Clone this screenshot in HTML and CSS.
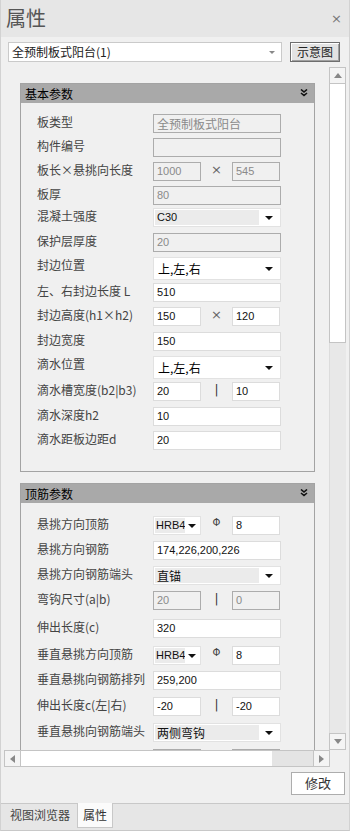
FILE: index.html
```html
<!DOCTYPE html>
<html>
<head>
<meta charset="utf-8">
<title>属性</title>
<link rel="stylesheet" href="styles.css">
</head>
<body>
<div class="window">
 <div class="titlebar">
  <span class="title">属性</span>
  <span class="close">×</span>
 </div>
 <div class="toolbar">
  <div class="combo"><span class="combo-text">全预制板式阳台(1)</span><span class="tri-small"></span></div>
  <div class="button">示意图</div>
 </div>

 <div class="scrollview">
  <div class="scroll-main">
   <div class="viewport">

    <div class="group">
     <div class="group-head"><span>基本参数</span>
      <svg class="chev" width="8" height="8" viewBox="0 0 8 8"><path d="M1 0.5 L4 3 L7 0.5 M1 4 L4 6.5 L7 4" fill="none" stroke="#111" stroke-width="1.6"/></svg>
     </div>
     <div class="group-body first">
      <div class="row h24"><span class="label">板类型</span><div class="field off wide cjk">全预制板式阳台</div></div>
      <div class="row h24"><span class="label">构件编号</span><div class="field off wide"></div></div>
      <div class="row h24"><span class="label">板长×悬挑向长度</span><div class="field off half">1000</div><span class="sep times">×</span><div class="field off half">545</div></div>
      <div class="row h22"><span class="label">板厚</span><div class="field off wide">80</div></div>
      <div class="row h25"><span class="label">混凝土强度</span><div class="drop wide"><span class="cur">C30</span><span class="arrow"></span></div></div>
      <div class="row h24"><span class="label">保护层厚度</span><div class="field off wide">20</div></div>
      <div class="row h26"><span class="label">封边位置</span><div class="drop plain wide tall"><span class="cur cjk">上,左,右</span><span class="arrow"></span></div></div>
      <div class="row h24"><span class="label">左、右封边长度 L</span><div class="field wide">510</div></div>
      <div class="row h25"><span class="label">封边高度(h1×h2)</span><div class="field half">150</div><span class="sep times">×</span><div class="field half">120</div></div>
      <div class="row h24"><span class="label">封边宽度</span><div class="field wide">150</div></div>
      <div class="row h26"><span class="label">滴水位置</span><div class="drop plain wide tall"><span class="cur cjk">上,左,右</span><span class="arrow"></span></div></div>
      <div class="row h25"><span class="label">滴水槽宽度(b2|b3)</span><div class="field half">20</div><span class="sep">|</span><div class="field half">10</div></div>
      <div class="row h24"><span class="label">滴水深度h2</span><div class="field wide">10</div></div>
      <div class="row h24"><span class="label">滴水距板边距d</span><div class="field wide">20</div></div>
     </div>
    </div>

    <div class="group">
     <div class="group-head"><span>顶筋参数</span>
      <svg class="chev" width="8" height="8" viewBox="0 0 8 8"><path d="M1 0.5 L4 3 L7 0.5 M1 4 L4 6.5 L7 4" fill="none" stroke="#111" stroke-width="1.6"/></svg>
     </div>
     <div class="group-body second">
      <div class="row h25"><span class="label">悬挑方向顶筋</span><div class="drop half"><span class="cur">HRB4</span><span class="arrow"></span></div><span class="sep phi">Φ</span><div class="field half">8</div></div>
      <div class="row h25"><span class="label">悬挑方向钢筋</span><div class="field wide">174,226,200,226</div></div>
      <div class="row h25"><span class="label">悬挑方向钢筋端头</span><div class="drop wide"><span class="cur cjk">直锚</span><span class="arrow"></span></div></div>
      <div class="row h28"><span class="label">弯钩尺寸(a|b)</span><div class="field off half">20</div><span class="sep">|</span><div class="field off half">0</div></div>
      <div class="row h27"><span class="label">伸出长度(c)</span><div class="field wide">320</div></div>
      <div class="row h25"><span class="label">垂直悬挑方向顶筋</span><div class="drop half"><span class="cur">HRB4</span><span class="arrow"></span></div><span class="sep phi">Φ</span><div class="field half">8</div></div>
      <div class="row h26"><span class="label">垂直悬挑向钢筋排列</span><div class="field wide">259,200</div></div>
      <div class="row h26"><span class="label">伸出长度c(左|右)</span><div class="field half">-20</div><span class="sep">|</span><div class="field half">-20</div></div>
      <div class="row h26"><span class="label">垂直悬挑向钢筋端头</span><div class="drop wide"><span class="cur cjk">两侧弯钩</span><span class="arrow"></span></div></div>
      <div class="row h26"><span class="label">垂直弯钩尺寸(a|b)</span><div class="field off half">20</div><span class="sep">|</span><div class="field off half">0</div></div>
     </div>
    </div>

   </div>
   <div class="vscroll">
    <div class="sbtn"><span class="tri up"></span></div>
    <div class="vthumb"></div>
    <div class="vtrack"></div>
    <div class="sbtn"><span class="tri down"></span></div>
   </div>
  </div>
  <div class="hscroll">
   <div class="sbtn h"><span class="tri left"></span></div>
   <div class="hthumb"></div>
   <div class="htrack"></div>
   <div class="sbtn h"><span class="tri right"></span></div>
  </div>
 </div>

 <div class="footer">
  <div class="button plain-btn">修改</div>
 </div>
 <div class="tabs">
  <span class="tab">视图浏览器</span>
  <span class="tab active">属性</span>
 </div>
</div>
</body>
</html>
```

FILE: styles.css
```css
* {
 box-sizing: border-box;
}
body {
 margin: 0;
 width: 350px;
 height: 831px;
 overflow: hidden;
 background: #f0f0f0;
 font-family: "Noto Sans CJK SC", sans-serif;
 font-size: 12px;
 color: #333;
}
.window {
 height: 831px;
 display: flex;
 flex-direction: column;
 border-left: 1px solid #d2d2d2;
 border-right: 1px solid #d2d2d2;
 border-bottom: 1px solid #c8c8c8;
}

/* title */
.titlebar {
 height: 37px;
 flex: none;
 background: #e6e6e6;
 display: flex;
 align-items: center;
 justify-content: space-between;
 padding: 0 7px 1px 5px;
}
.title {
 font-size: 20px;
 line-height: 24px;
 color: #555;
}
.close {
 font-family: "DejaVu Sans", sans-serif;
 font-size: 13px;
 color: #777;
}

/* combo + button */
.toolbar {
 height: 30px;
 flex: none;
 display: flex;
 align-items: flex-start;
 padding: 5px 0 0 7px;
}
.combo {
 width: 274px;
 height: 20px;
 border: 1px solid #cacaca;
 background: #fff;
 display: flex;
 align-items: center;
 justify-content: space-between;
 padding: 0 6px 0 3px;
 color: #222;
}
.combo-text {
 line-height: 16px;
}
.tri-small {
 width: 0;
 height: 0;
 border-left: 3px solid transparent;
 border-right: 3px solid transparent;
 border-top: 3px solid #888;
}
.button {
 margin-left: 8px;
 width: 50px;
 height: 20px;
 border: 1px solid #6e6e6e;
 background: #e3e3e3;
 box-shadow: inset 1px 1px 0 #fff, inset -1px -1px 0 #a0a0a0;
 text-align: center;
 line-height: 17px;
 color: #222;
}

/* scroll area */
.scrollview {
 height: 700px;
 flex: none;
 margin-left: 3px;
 width: 342px;
 display: flex;
 flex-direction: column;
}
.scroll-main {
 height: 683px;
 display: flex;
}
.viewport {
 width: 325px;
 height: 683px;
 overflow: hidden;
 padding: 16px 0 0 16px;
}
.vscroll {
 width: 17px;
 display: flex;
 flex-direction: column;
 background: #e8e8e8;
}
.sbtn {
 height: 17px;
 flex: none;
 border: 1px solid #c4c4c4;
 background: #f4f4f4;
 display: flex;
 align-items: center;
 justify-content: center;
}
.sbtn.h {
 width: 17px;
 height: 17px;
}
.vthumb {
 height: 259px;
 background: #fff;
 border: 1px solid #c4c4c4;
 border-top: 0;
}
.vtrack {
 flex: 1;
 border-left: 1px solid #dcdcdc;
}
.hscroll {
 height: 17px;
 width: 326px;
 display: flex;
 background: #e4e4e4;
}
.hthumb {
 width: 251px;
 background: #fff;
 border-top: 1px solid #c4c4c4;
 border-bottom: 1px solid #c4c4c4;
}
.htrack {
 flex: 1;
 border-top: 1px solid #c4c4c4;
 border-bottom: 1px solid #c4c4c4;
}
.tri {
 width: 0;
 height: 0;
 border: 4px solid transparent;
}
.tri.up { border-bottom: 5px solid #888; border-top: 0; }
.tri.down { border-top: 5px solid #888; border-bottom: 0; }
.tri.left { border-right: 5px solid #888; border-left: 0; }
.tri.right { border-left: 5px solid #888; border-right: 0; }

/* groups */
.group {
 width: 295px;
 border: 1px solid #a3a3a3;
 margin-bottom: 11px;
}
.group-head {
 height: 19px;
 background: #a9a9a9;
 display: flex;
 align-items: center;
 justify-content: space-between;
 padding: 0 6px 0 4px;
 color: #000;
 line-height: 14px;
}
.chev {
 margin-top: -2px;
}
.group-body {
 padding: 11px 0 16px 16px;
}
.group-body.second {
 padding-top: 13px;
}

.row {
 display: flex;
 align-items: flex-start;
}
.h22 { height: 22px; }
.h24 { height: 24px; }
.h25 { height: 25px; }
.h26 { height: 26px; }
.h27 { height: 27px; }
.h28 { height: 28px; }
.label {
 width: 116px;
 flex: none;
 line-height: 14px;
 padding-top: 1px;
 color: #444;
 white-space: nowrap;
}

.field {
 height: 19px;
 border: 1px solid #dcdcdc;
 background: #fff;
 font-family: "Liberation Sans", sans-serif;
 font-size: 11px;
 line-height: 17px;
 padding-left: 3px;
 color: #111;
 white-space: nowrap;
 overflow: hidden;
}
.field.off {
 background: #f0f0f0;
 border-color: #acacac;
 color: #8a8a8a;
}
.wide {
 width: 128px;
}
.half {
 width: 48px;
}
.sep {
 width: 31px;
 flex: none;
 text-align: center;
 font-family: "DejaVu Sans", sans-serif;
 font-size: 12px;
 line-height: 16px;
 color: #333;
}
.times {
 color: #666;
 font-size: 13px;
}
.phi {
 font-size: 10px;
 line-height: 14px;
 color: #444;
}
.cjk {
 font-family: "Noto Sans CJK SC", sans-serif;
 font-size: 12px;
}

.drop {
 height: 19px;
 border: 1px solid #e2e2e2;
 background: #fff;
 display: flex;
 align-items: center;
 padding: 1px;
 font-family: "Liberation Sans", sans-serif;
 font-size: 11px;
 color: #111;
}
.drop .cur {
 flex: 1;
 height: 15px;
 background: #ebebeb;
 line-height: 15px;
 padding-left: 2px;
 white-space: nowrap;
 overflow: hidden;
}
.drop.half .cur {
 flex: none;
 width: 30px;
 padding-left: 1px;
}
.drop .arrow {
 width: 20px;
 flex: none;
 display: flex;
 justify-content: center;
}
.drop.half .arrow {
 flex: 1;
 width: auto;
}
.drop .arrow::before {
 content: "";
 border-left: 4px solid transparent;
 border-right: 4px solid transparent;
 border-top: 4px solid #111;
}
.drop.plain .cur {
 background: #fff;
 color: #000;
 padding-left: 3px;
}
.drop.tall {
 height: 23px;
}

/* bottom */
.footer {
 height: 36px;
 flex: none;
 display: flex;
 justify-content: flex-end;
 padding: 5px 4px 0 0;
}
.plain-btn {
 width: 54px;
 height: 23px;
 background: #fff;
 border: 1px solid #adadad;
 box-shadow: none;
 font-size: 13px;
 line-height: 20px;
 color: #333;
}
.tabs {
 flex: 1;
 background: #e6e6e6;
 border-top: 1px solid #c8c8c8;
 display: flex;
 align-items: flex-start;
 padding-left: 4px;
}
.tab {
 height: 23px;
 line-height: 20px;
 padding: 0 5px;
 color: #444;
 margin-top: 1px;
}
.tab.active {
 margin-top: -1px;
 height: 25px;
 padding-top: 2px;
 background: #fbfbfb;
 border: 1px solid #c8c8c8;
 border-top: 0;
 margin-left: 2px;
 color: #333;
}
```
